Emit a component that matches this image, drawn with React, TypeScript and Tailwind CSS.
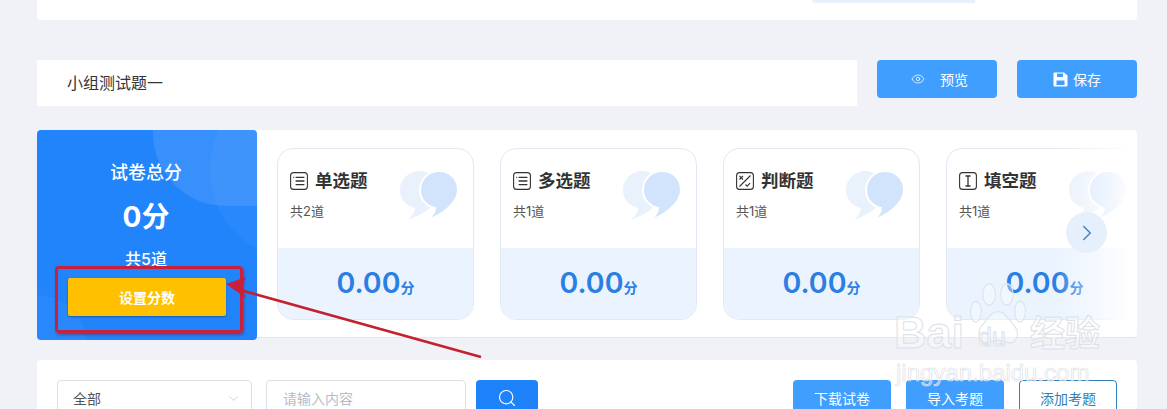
import React from 'react';
import { ChevronDown, ChevronRight, Eye, Search } from 'lucide-react';

const FONT = "font-['Inter','Noto_Sans_CJK_SC',sans-serif]";

interface QuestionCard {
  title: string;
  count: number;
  icon: 'list' | 'judge' | 'blank';
}

const CARDS: QuestionCard[] = [
  { title: '单选题', count: 2, icon: 'list' },
  { title: '多选题', count: 1, icon: 'list' },
  { title: '判断题', count: 1, icon: 'judge' },
  { title: '填空题', count: 1, icon: 'blank' },
];

const TypeIcon = ({ icon }: { icon: QuestionCard['icon'] }) => (
  <svg width="18" height="18" viewBox="0 0 18 18" fill="none" stroke="#333" strokeWidth="1.1">
    <rect x="0.6" y="0.6" width="16.8" height="16.8" rx="3" />
    {icon === 'list' && (
      <path d="M3.2 5.4h1M5.6 5.4h8.8M5.6 9h8.8M5.6 12.6h8.8" strokeWidth="1.4" />
    )}
    {icon === 'judge' && (
      <path d="M3.5 4l3.5 3.5M7 4l-3.5 3.5M14.5 3.5l-11 11M9.5 12.5l1.6 1.6 3-3" />
    )}
    {icon === 'blank' && <path d="M6.5 4h5M6.5 14h5M9 4v10" strokeWidth="1.3" />}
  </svg>
);

const SaveIcon = () => (
  <svg width="15" height="15" viewBox="0 0 15 15">
    <path
      fillRule="evenodd"
      d="M1.5 0.5h9.5l3.5 3v10a1 1 0 0 1-1 1h-12a1 1 0 0 1-1-1v-12a1 1 0 0 1 1-1zM4 1.5v3.6h6V1.5zM3.5 8.6v4.4h8V8.6z"
      fill="#ffffff"
    />
  </svg>
);

const Quote = () => (
  <svg width="60" height="52" viewBox="0 0 60 52" className="absolute top-[21px] left-[122px]">
    <path
      d="M20 1C9 1 0 9 0 20 0 29 6 36 15 38 15 42 12 46 8 50 16 47 24 43 30 38L30 5C27 2 24 1 20 1z"
      fill="#e9f1fc"
    />
    <path
      d="M39 1C50 1 58 9 58 20 58 33 42 45 28 50 33 45 35 41 35 38 26 36 20 29 20 20 20 9 29 1 39 1z"
      fill="#d2e4fb"
      stroke="#ffffff"
      strokeWidth="2"
    />
  </svg>
);

const Card = ({ card }: { card: QuestionCard }) => (
  <div className="relative w-[197px] h-[172px] shrink-0 rounded-[16px] border border-[#e3e9f2] bg-white overflow-hidden flex flex-col">
    <Quote />
    <div className="h-[99px] pl-[12px] pt-[22px]">
      <div className="flex items-center gap-[7px] h-[20px]">
        <TypeIcon icon={card.icon} />
        <span className="text-[17.5px] font-bold text-[#333]">{card.title}</span>
      </div>
      <div className="mt-[10px] text-[13px] leading-[20px] text-[#555]">共{card.count}道</div>
    </div>
    <div className="flex-1 bg-[#eaf3fe] flex items-center justify-center pb-[1px]">
      <span className="text-[#2b7fe3] text-[28.5px] font-semibold leading-none">0.00</span>
      <span className="text-[#2b7fe3] text-[14px] font-semibold mt-[8px]">分</span>
    </div>
  </div>
);

const Watermark = () => (
  <div className="absolute left-[893px] top-[283px] w-[220px] pointer-events-none">
    <svg width="62" height="64" viewBox="0 0 70 56" preserveAspectRatio="none" className="absolute left-[74px] top-0" fill="#ffffff" fillOpacity="0.35" stroke="#dfe3ea" strokeWidth="1.2">
      <ellipse cx="10" cy="25" rx="6" ry="9" />
      <ellipse cx="25" cy="10" rx="7" ry="9.5" />
      <ellipse cx="45" cy="10" rx="7" ry="9.5" />
      <ellipse cx="60" cy="25" rx="6" ry="9" />
      <path d="M35 25c8 0 13 8 19 13 6 6 2 16-8 14-4-1-7-2-11-2s-7 1-11 2c-10 2-13-8-8-14 6-5 11-13 19-13z" />
    </svg>
    <div className="absolute left-[1px] top-[26px] text-[45px] leading-[48px] font-bold font-['Liberation_Sans',sans-serif] text-white/40 [-webkit-text-stroke:1px_#dde1e8]">
      Bai
    </div>
    <div className="absolute left-[85px] top-[40px] text-[25px] leading-[28px] font-['Liberation_Sans',sans-serif] text-white/40 [-webkit-text-stroke:1px_#dde1e8]">
      du
    </div>
    <div className="absolute left-[137px] top-[30px] text-[35px] leading-[40px] font-bold text-white/40 [-webkit-text-stroke:1px_#dde1e8] whitespace-nowrap">
      经验
    </div>
    <div className="absolute left-[3px] top-[77px] text-[24px] leading-[26px] font-['Liberation_Sans',sans-serif] text-white/40 [-webkit-text-stroke:0.7px_#dde1e8] whitespace-nowrap">
      jingyan.baidu.com
    </div>
  </div>
);

const Annotation = () => (
  <>
    <div className="absolute left-[55px] top-[266px] w-[188px] h-[67px] rounded-[4px] border-[3px] border-[#c9203c] shadow-[1px_2px_3px_rgba(90,20,50,0.45)]" />
    <svg width="1167" height="409" className="absolute left-0 top-0 pointer-events-none">
      <line x1="481" y1="357" x2="240" y2="290" stroke="#c4202f" strokeWidth="2.6" />
      <path d="M226 284l20-7-5 11 5 10z" fill="#c9203c" />
    </svg>
  </>
);

export default function App() {
  return (
    <div className={`relative w-[1167px] h-[409px] overflow-hidden bg-[#f0f2f7] pl-[37px] pr-[30px] ${FONT}`}>
      {/* Top panel, scrolled off */}
      <div className="h-[20px] bg-white rounded-b-[4px] flex justify-end pr-[162px]">
        <div className="w-[163px] h-[3px] bg-[#e8f0fb] rounded-bl-[6px]" />
      </div>

      {/* Title row */}
      <div className="mt-[40px] flex items-start">
        <div className="w-[820px] h-[46px] bg-white pl-[30px] flex items-center text-[16px] text-[#333]">
          小组测试题一
        </div>
        <button className="ml-[20px] w-[120px] h-[38px] rounded-[4px] bg-[#409eff] text-white text-[14px] flex items-center justify-center gap-[15px] pl-[5px]">
          <Eye size={14} strokeWidth={1.3} />
          预览
        </button>
        <button className="ml-[20px] w-[120px] h-[38px] rounded-[4px] bg-[#409eff] text-white text-[14px] flex items-center justify-center gap-[5px]">
          <SaveIcon />
          保存
        </button>
      </div>

      {/* Score summary */}
      <div className="mt-[24px] h-[208px] bg-white rounded-[4px] border-b border-[#e4e7ee] flex relative">
        <div className="relative w-[220px] h-[210px] shrink-0 rounded-[4px] bg-[#2184fb] overflow-hidden text-white flex flex-col items-center pr-[2px]">
          <div className="absolute left-[116px] top-[-70px] w-[170px] h-[146px] rounded-full bg-white/10" />
          <div className="absolute left-[173px] top-[-50px] w-[180px] h-[180px] rounded-full bg-white/[0.04]" />
          <div className="absolute left-[-50px] top-[165px] w-[100px] h-[100px] rounded-full bg-white/[0.04]" />
          <div className="relative mt-[31px] text-[18px] font-medium leading-[24px]">试卷总分</div>
          <div className="relative mt-[15px] text-[28px] font-bold leading-[34px]">0分</div>
          <div className="relative mt-[14px] text-[16px] font-medium leading-[22px]">共5道</div>
          <button className="relative mt-[8px] ml-[2px] w-[158px] h-[38px] rounded-[2px] bg-[#ffc000] text-white text-[14px] font-bold shadow-[0_1px_2px_rgba(0,0,0,0.3)]">
            设置分数
          </button>
        </div>
        <div className="relative flex-1 overflow-hidden pl-[20px] pt-[18px] flex gap-[26px] mr-[10px]">
          {CARDS.map((card) => (
            <Card key={card.title} card={card} />
          ))}
          <div className="absolute right-0 top-0 bottom-0 w-[72px] bg-gradient-to-r from-white/0 to-white/90" />
        </div>
        <div className="absolute left-[1029px] top-[82px] w-[41px] h-[41px] rounded-full bg-[#e6f0fd] flex items-center justify-center">
          <ChevronRight size={26} strokeWidth={1.3} className="text-[#3f7fc9]" />
        </div>
      </div>

      {/* Filter bar */}
      <div className="mt-[22px] h-[80px] bg-white rounded-[4px] pl-[20px] pr-[20px] pt-[20px] flex items-start">
        <div className="w-[195px] h-[36px] rounded-[4px] border border-[#dcdfe6] pl-[15px] pr-[10px] flex items-center justify-between text-[14px] text-[#555]">
          全部
          <ChevronDown size={15} strokeWidth={1.2} className="text-[#c0c4cc]" />
        </div>
        <div className="ml-[14px] w-[200px] h-[36px] rounded-[4px] border border-[#dcdfe6] pl-[16px] flex items-center text-[14px] text-[#b8bcc4]">
          请输入内容
        </div>
        <button className="ml-[10px] w-[62px] h-[36px] rounded-[4px] bg-[#1e82fa] flex items-center justify-center">
          <Search size={20} strokeWidth={1.4} className="text-white" />
        </button>
        <div className="ml-auto flex gap-[15px]">
          <button className="w-[98px] h-[36px] rounded-[4px] bg-[#409eff] text-white text-[14px]">下载试卷</button>
          <button className="w-[98px] h-[36px] rounded-[4px] bg-[#409eff] text-white text-[14px]">导入考题</button>
          <button className="w-[98px] h-[36px] rounded-[4px] bg-white border border-[#2f7fb8] text-[#2f7fb8] text-[14px]">添加考题</button>
        </div>
      </div>

      <Annotation />
      <Watermark />
    </div>
  );
}
